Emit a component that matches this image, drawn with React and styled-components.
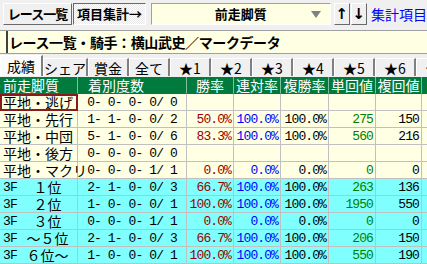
import styled, { createGlobalStyle } from "styled-components";

const GlobalStyle = createGlobalStyle`
  html, body {
    margin: 0;
    padding: 0;
    background: #f0f0f0;
    overflow: hidden;
  }
  body {
    font-family: "Noto Sans CJK JP", "Noto Sans", sans-serif;
    font-size: 14px;
    color: #000;
  }
`;

const Container = styled.div`
  width: 427px;
  height: 264px;
  overflow: hidden;
  display: flex;
  flex-direction: column;
`;

const Toolbar = styled.div`
  display: flex;
  align-items: stretch;
  height: 22px;
  padding: 3px 0 3px 3px;
  gap: 1px;
`;

const ToolButton = styled.div`
  display: flex;
  align-items: center;
  justify-content: center;
  box-sizing: border-box;
  width: ${(props) => props.w}px;
  font-size: 13px;
  font-weight: 700;
  line-height: 16px;
  letter-spacing: ${(props) => (props.tight ? "-1px" : "0")};
  border: 1px solid;
  border-color: ${(props) =>
    props.pressed ? "#696969 #fff #fff #696969" : "#fff #696969 #696969 #fff"};
  background: ${(props) =>
    props.pressed
      ? "repeating-conic-gradient(#ffffff 0 25%, #e8e8e8 0 50%) 0 0 / 2px 2px"
      : "#f0f0f0"};
`;

const Combo = styled.div`
  position: relative;
  display: flex;
  align-items: center;
  justify-content: center;
  box-sizing: border-box;
  width: 190px;
  margin-left: 4px;
  background: #ffffe3;
  border: 1px solid;
  border-color: #a0a0a0 #fff #fff #a0a0a0;
  font-size: 13px;
  font-weight: 700;
  line-height: 16px;
`;

const ComboArrow = styled.div`
  position: absolute;
  right: 9px;
  top: 7px;
  width: 0;
  height: 0;
  border-left: 5px solid transparent;
  border-right: 5px solid transparent;
  border-top: 7px solid #808080;
`;

const ArrowButton = styled.div`
  display: flex;
  align-items: center;
  justify-content: center;
  box-sizing: border-box;
  width: 17px;
  border: 1px solid;
  border-color: #fff #696969 #696969 #fff;
  background: #f0f0f0;
  font-family: "DejaVu Sans", sans-serif;
  font-size: 15px;
  font-weight: 700;
  line-height: 16px;
  margin-left: ${(props) => (props.first ? "2px" : "0")};
`;

const LinkText = styled.span`
  display: flex;
  align-items: center;
  margin-left: 3px;
  color: #0000ff;
  font-size: 14px;
  line-height: 16px;
  white-space: nowrap;
`;

const TitleBar = styled.div`
  height: 22px;
  margin-top: 2px;
  padding-left: 6px;
  background: #ffffe3;
  border-top: 1px solid #a0a0a0;
  border-bottom: 1px solid #a0a0a0;
  display: flex;
`;

const TitleBox = styled.div`
  flex: 1;
  display: flex;
  align-items: center;
  border-left: 2px solid #404040;
  padding-left: 1px;
  font-size: 14px;
  font-weight: 700;
  line-height: 18px;
  white-space: nowrap;
  letter-spacing: -0.4px;
`;

const Tabs = styled.div`
  display: flex;
  align-items: flex-end;
  height: 21px;
  margin-top: 1px;
`;

const Tab = styled.div`
  box-sizing: border-box;
  flex: 0 0 ${(props) => (props.active ? 43 : 41)}px;
  height: ${(props) => (props.active ? 21 : 18)}px;
  display: flex;
  align-items: center;
  justify-content: center;
  font-size: 14px;
  line-height: 16px;
  background: ${(props) => (props.active ? "#fbfbfb" : "#f0f0f0")};
  border-top: 1px solid #fff;
  border-left: 1px solid #fff;
  border-right: 2px solid #808080;
  white-space: nowrap;
`;

const Table = styled.div`
  display: flex;
  flex-direction: column;
  margin-top: 1px;
`;

const Row = styled.div`
  display: grid;
  grid-template-columns: 78px 109px 47px 47px 48px 47px 46px 40px;
  height: 17px;
  background: ${(props) =>
    props.tone === "head"
      ? "#007a3d"
      : props.tone === "cyan"
      ? "#80ffff"
      : "#ffffe3"};
  color: ${(props) => (props.tone === "head" ? "#fff" : "#000")};
`;

const Cell = styled.div`
  box-sizing: border-box;
  display: flex;
  align-items: center;
  justify-content: ${(props) =>
    props.align === "right"
      ? "flex-end"
      : props.align === "center"
      ? "center"
      : "flex-start"};
  padding: 0 ${(props) => (props.align === "right" ? 2 : 3)}px 0
    ${(props) => props.indent || 3}px;
  border-right: 1px solid ${(props) => (props.head ? "#7fbf9e" : "#c0c0c0")};
  border-bottom: 1px solid ${(props) => (props.head ? "#007a3d" : "#c0c0c0")};
  white-space: pre;
  line-height: 15px;
  font-size: 14px;
  outline: ${(props) => (props.selected ? "2px solid #8b1a1a" : "none")};
  outline-offset: -2px;
`;

const Num = styled.span`
  font-family: "Liberation Mono", monospace;
  font-size: 13px;
  letter-spacing: -0.9px;
  color: ${(props) => props.color || "#000"};
`;

const Kind = styled.span`
  font-family: "Liberation Mono", monospace;
  font-size: 13px;
  letter-spacing: -0.9px;
  width: 18px;
`;

const Rank = styled.span`
  flex: 1;
  text-align: center;
`;

const headers = ["前走脚質", "着別度数", "勝率", "連対率", "複勝率", "単回値", "複回値", "単"];

const rows = [
  { label: "平地・逃げ", count: "0- 0- 0- 0/ 0", v: [] },
  { label: "平地・先行", count: "1- 1- 0- 0/ 2", v: ["50.0%", "100.0%", "100.0%", "275", "150"] },
  { label: "平地・中団", count: "5- 1- 0- 0/ 6", v: ["83.3%", "100.0%", "100.0%", "560", "216"] },
  { label: "平地・後方", count: "0- 0- 0- 0/ 0", v: [] },
  { label: "平地・マクリ", count: "0- 0- 0- 1/ 1", v: ["0.0%", "0.0%", "0.0%", "0", "0"] },
  { kind: "3F", label: "１位", count: "2- 1- 0- 0/ 3", v: ["66.7%", "100.0%", "100.0%", "263", "136"] },
  { kind: "3F", label: "２位", count: "1- 0- 0- 0/ 1", v: ["100.0%", "100.0%", "100.0%", "1950", "550"] },
  { kind: "3F", label: "３位", count: "0- 0- 0- 1/ 1", v: ["0.0%", "0.0%", "0.0%", "0", "0"] },
  { kind: "3F", label: "～５位", count: "2- 1- 0- 0/ 3", v: ["66.7%", "100.0%", "100.0%", "206", "150"] },
  { kind: "3F", label: "６位～", count: "1- 0- 0- 0/ 1", v: ["100.0%", "100.0%", "100.0%", "550", "190"] },
];

const valueColors = ["#990000", "#0000ff", "#000000", "#008000", "#000000"];

const tabs = ["成績", "シェア", "賞金", "全て", "★1", "★2", "★3", "★4", "★5", "★6", "★7"];

const App = () => {
  return (
    <Container>
      <GlobalStyle />
      <Toolbar>
        <ToolButton w={73} tight>
          レース一覧
        </ToolButton>
        <ToolButton w={77} pressed>
          項目集計→
        </ToolButton>
        <Combo>
          前走脚質
          <ComboArrow />
        </Combo>
        <ArrowButton first>↑</ArrowButton>
        <ArrowButton>↓</ArrowButton>
        <LinkText>集計項目</LinkText>
      </Toolbar>
      <TitleBar>
        <TitleBox>レース一覧・騎手：横山武史／マークデータ</TitleBox>
      </TitleBar>
      <Tabs>
        {tabs.map((t, i) => (
          <Tab key={t} active={i === 0}>
            {t}
          </Tab>
        ))}
      </Tabs>
      <Table>
        <Row tone="head">
          {headers.map((h, i) => (
            <Cell
              key={h}
              head
              align={i < 2 ? "left" : "center"}
              indent={i === 1 ? 10 : 3}
            >
              {h}
            </Cell>
          ))}
        </Row>
        {rows.map((r, idx) => (
          <Row key={idx} tone={r.kind ? "cyan" : "yellow"}>
            <Cell selected={idx === 0}>
              {r.kind ? (
                <>
                  <Kind>{r.kind}</Kind>
                  <Rank>{r.label}</Rank>
                </>
              ) : (
                r.label
              )}
            </Cell>
            <Cell align="center">
              <Num>{r.count}</Num>
            </Cell>
            {[0, 1, 2, 3, 4].map((k) => (
              <Cell key={k} align="right">
                <Num color={valueColors[k]}>{r.v[k] || ""}</Num>
              </Cell>
            ))}
            <Cell />
          </Row>
        ))}
      </Table>
    </Container>
  );
};

export default App;
